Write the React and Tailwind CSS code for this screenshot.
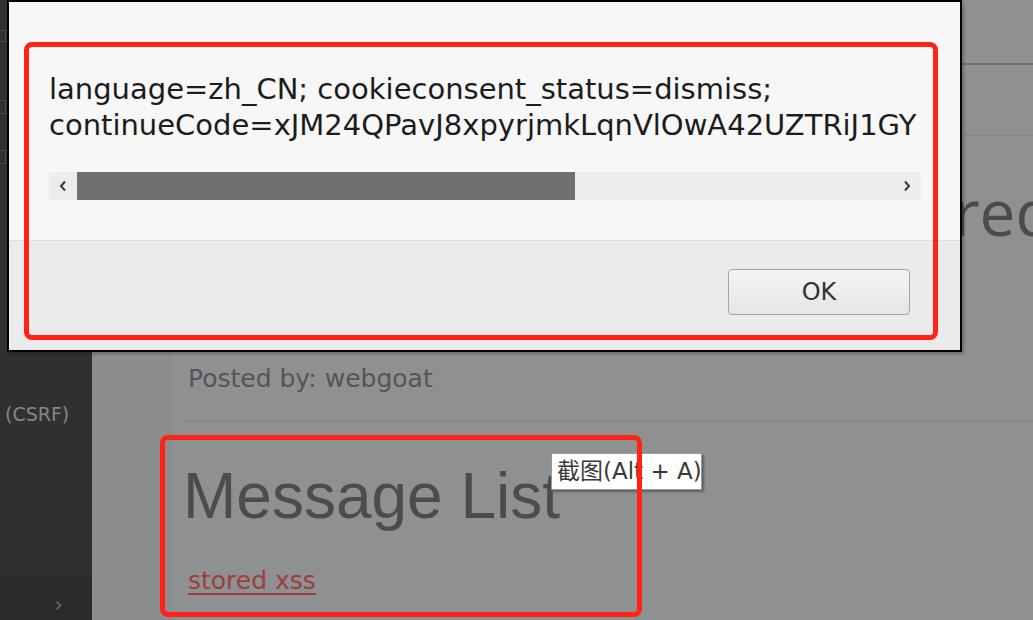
import React from "react";

const dejavu = { fontFamily: '"DejaVu Sans", "Noto Sans CJK SC", sans-serif' };

function Sidebar() {
  return (
    <div className="w-[92px] shrink-0 bg-[#2f3032] flex flex-col">
      <div className="flex-1 relative">
        {/* items that are cut off by the window edge */}
        <div className="mt-[30px] ml-[-4px] w-[10px] h-[12px] border border-[#48494b]" />
        <div className="mt-[58px] ml-[-4px] w-[10px] h-[14px] border border-[#48494b]" />
        <div className="mt-[36px] ml-[-4px] w-[10px] h-[14px] border border-[#48494b]" />
        <div
          className="mt-[241px] pl-[5px] text-[19px] text-[#85868a] leading-none"
          style={{ fontFamily: '"DejaVu Sans", sans-serif' }}
        >
          (CSRF)
        </div>
      </div>
      <div className="h-[45px] bg-[#2a2b2d] border-t border-[#333436] flex items-center justify-end pr-[30px] pt-[15px]">
        <svg width="7" height="11" viewBox="0 0 7 11" fill="none">
          <path d="M1.5 1.5 L5.5 5.5 L1.5 9.5" stroke="#66676a" strokeWidth="1.6" />
        </svg>
      </div>
    </div>
  );
}

function Content() {
  return (
    <div className="flex-1 flex bg-[#8f9092]">
      <div className="w-[81px] shrink-0 bg-[#8c8d8f]" />
      <div className="flex-1 flex flex-col overflow-hidden">
        <div className="h-[65px] border-b-2 border-[#6f7072]" />
        <div className="h-[71px] border-b border-[#848587]" />
        <div
          className="h-[219px] pl-[684px] whitespace-nowrap text-[64px] text-[#4a4b4d] leading-none pt-[44px]"
          style={{ fontFamily: '"Open Sans", sans-serif' }}
        >
          Stored Cross Site Scripting
        </div>
        <div className="pl-[15px] pt-[8px] text-[25px] text-[#545557] leading-[32px]" style={dejavu}>
          Posted by: webgoat
        </div>
        <div className="ml-[10px] mt-[26px] border-b border-[#838486]" />
        <div
          className="pl-[10px] pt-[42px] text-[64px] text-[#4b4c4e] leading-none"
          style={{ fontFamily: '"Liberation Sans", Arial, sans-serif' }}
        >
          Message List
        </div>
        <div className="pl-[15px] pt-[37px] text-[25px] leading-[32px]" style={dejavu}>
          <a className="text-[#9b3f3d] underline decoration-[#9b3f3d] underline-offset-[4px]">stored xss</a>
        </div>
      </div>
    </div>
  );
}

function Dialog() {
  return (
    <div className="absolute left-[7px] top-0 w-[955px] h-[352px] border-2 border-black bg-[#f7f7f7] flex flex-col shadow-[2px_2px_3px_rgba(0,0,0,0.25)]">
      <div className="h-[239px] border-b border-[#dcdcdc] pl-[40px] pr-[39px] pt-[69px]">
        <div className="w-[871px] overflow-hidden">
          <div className="text-[29px] leading-[36px] text-[#1c1c1c] whitespace-nowrap" style={dejavu}>
            language=zh_CN; cookieconsent_status=dismiss;
            <br />
            continueCode=xJM24QPavJ8xpyrjmkLqnVlOwA42UZTRiJ1GY
          </div>
        </div>
        <div className="mt-[29px] w-[872px] h-[28px] bg-[#ededed] flex items-center">
          <div className="w-[28px] h-full flex items-center justify-center">
            <svg width="8" height="12" viewBox="0 0 8 12" fill="none">
              <path d="M6 1.5 L2 6 L6 10.5" stroke="#3a3a3a" strokeWidth="2" />
            </svg>
          </div>
          <div className="w-[498px] h-full bg-[#707070]" />
          <div className="flex-1" />
          <div className="w-[28px] h-full flex items-center justify-center">
            <svg width="8" height="12" viewBox="0 0 8 12" fill="none">
              <path d="M2 1.5 L6 6 L2 10.5" stroke="#3a3a3a" strokeWidth="2" />
            </svg>
          </div>
        </div>
      </div>
      <div className="flex-1 bg-[#ebebeb] flex justify-end items-start pt-[28px] pr-[50px]">
        <button
          className="w-[182px] h-[46px] rounded-[4px] border border-[#a4a4a4] bg-gradient-to-b from-[#f4f4f4] to-[#e6e6e6] text-[24px] text-[#333] flex items-center justify-center"
          style={dejavu}
        >
          OK
        </button>
      </div>
    </div>
  );
}

export default function App() {
  return (
    <div className="relative w-[1033px] h-[620px] overflow-hidden flex">
      <Sidebar />
      <Content />

      <Dialog />

      {/* screenshot tool tooltip */}
      <div
        className="absolute left-[551px] top-[453px] w-[151px] h-[37px] bg-white border border-[#9a9a9a] shadow-[2px_2px_2px_rgba(0,0,0,0.35)] flex items-center pl-[5px] text-[23px] text-[#3a3a3a] whitespace-nowrap overflow-hidden"
        style={dejavu}
      >
        截图(Alt + A)
      </div>

      {/* red annotation boxes */}
      <div className="absolute left-[24px] top-[42px] w-[914px] h-[298px] border-[5px] border-[#ff2216] rounded-[8px]" />
      <div className="absolute left-[160px] top-[435px] w-[482px] h-[182px] border-[5px] border-[#ff2216] rounded-[8px]" />
    </div>
  );
}
